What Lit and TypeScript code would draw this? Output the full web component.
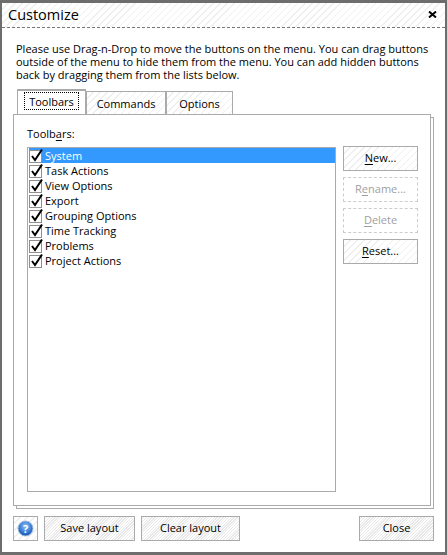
import { LitElement, css, html, svg } from "lit";
import { customElement } from "lit/decorators.js";

const toolbars = [
  "System",
  "Task Actions",
  "View Options",
  "Export",
  "Grouping Options",
  "Time Tracking",
  "Problems",
  "Project Actions",
];

const checkIcon = svg`<svg class="check" width="15" height="15" viewBox="0 0 15 15">
  <rect x="0.5" y="2.5" width="12" height="12" fill="#fff" stroke="#8e8e8e" />
  <path d="M3 8 L6 12 L13 1.5" fill="none" stroke="#000" stroke-width="2" />
</svg>`;

@customElement("app-root")
export class AppRoot extends LitElement {
  static get styles() {
    return css`
      :host {
        display: block;
        width: 447px;
        height: 555px;
        box-sizing: border-box;
        border: solid #6d6d6d;
        border-width: 3px 2px;
        background: #fff;
        font-family: "Open Sans", "Noto Sans", sans-serif;
        font-size: 11px;
        color: #000;
      }

      .hatch {
        background: repeating-linear-gradient(135deg, #fff 0 4px, #efefef 4px 5px);
      }

      .title {
        box-sizing: border-box;
        height: 25px;
        display: flex;
        align-items: center;
        justify-content: space-between;
        padding: 0 8px 2px 6px;
        border-bottom: 1px dashed #777;
        font-size: 14.5px;
      }

      .close {
        display: block;
      }

      .content {
        padding: 14px 11px 0;
      }

      .intro {
        margin: 0 0 8px 3px;
        line-height: 13px;
        white-space: nowrap;
      }

      .tabs {
        display: flex;
        align-items: flex-end;
        margin-left: 4px;
        margin-bottom: -1px;
        position: relative;
      }

      .tab {
        box-sizing: border-box;
        height: 24px;
        border: 1px solid #aaa;
        border-bottom: none;
        display: flex;
        align-items: center;
        justify-content: center;
      }

      .tab.active {
        height: 26px;
        background: #fff;
        border-width: 2px 1px 0;
        align-items: flex-start;
      }

      .tab.active span {
        border: 1px dotted #000;
        margin-top: 1px;
        padding: 1px 4px 0;
        line-height: 15px;
      }

      .panel-wrap {
        position: relative;
        width: 421px;
        height: 395px;
      }

      .panel-back {
        position: absolute;
        left: 3px;
        top: 3px;
        right: 0;
        bottom: 0;
        border: 1px solid #aaa;
      }

      .panel {
        position: absolute;
        left: 0;
        top: 0;
        right: 3px;
        bottom: 3px;
        box-sizing: border-box;
        border: 1px solid #aaa;
        background: #fff;
        padding: 11px 11px 13px 13px;
      }

      .label {
        height: 21px;
      }

      u {
        text-underline-offset: 2px;
      }

      .body {
        display: flex;
        gap: 7px;
        align-items: flex-start;
      }

      .list {
        box-sizing: border-box;
        width: 309px;
        height: 345px;
        border: 1px solid #aaa;
        padding: 0;
      }

      .row {
        height: 15px;
        display: flex;
        align-items: center;
        line-height: 15px;
        margin: 0 0 0 1px;
      }

      .row.selected {
        background: #3399ff;
        color: #fff;
      }

      .check {
        flex: none;
        margin-right: 1px;
      }

      .actions {
        display: flex;
        flex-direction: column;
        gap: 6px;
        margin-top: -1px;
      }

      .btn {
        box-sizing: border-box;
        width: 75px;
        height: 25px;
        border: 1px solid #aaa;
        display: flex;
        align-items: center;
        justify-content: center;
        font: inherit;
        padding: 0 0 2px;
        color: inherit;
      }

      .btn.disabled {
        border: 1px dashed #ccc;
        color: #a0a0a0;
        background: #fff;
      }

      .footer {
        display: flex;
        gap: 6px;
        margin-top: 7px;
      }

      .footer .btn.dense {
        background: repeating-linear-gradient(135deg, #fff 0 1px, #e8e8e8 1px 2px);
      }

      .help {
        width: 25px;
      }

      .footer .btn.help {
        padding: 0;
      }

      .save {
        width: 91px;
      }

      .clear {
        width: 99px;
      }

      .closebtn {
        margin-left: auto;
      }
    `;
  }

  render() {
    return html`
      <div class="title hatch">
        <span>Customize</span>
        <svg class="close" width="9" height="7" viewBox="0 0 9 7">
          <path d="M1 0.5 L8 6.5 M8 0.5 L1 6.5" stroke="#000" stroke-width="2" />
        </svg>
      </div>
      <div class="content">
        <p class="intro">
          Please use Drag-n-Drop to move the buttons on the menu. You can drag buttons<br />
          outside of the menu to hide them from the menu. You can add hidden buttons<br />
          back by dragging them from the lists below.
        </p>
        <div class="tabs">
          <div class="tab active" style="width:69px"><span>Toolbars</span></div>
          <div class="tab hatch" style="width:80px">Commands</div>
          <div class="tab hatch" style="width:67px">Options</div>
        </div>
        <div class="panel-wrap">
          <div class="panel-back"></div>
          <div class="panel">
            <div class="label">Toolb<u>a</u>rs:</div>
            <div class="body">
              <div class="list">
                ${toolbars.map(
                  (name, i) => html`<div class="row ${i === 0 ? "selected" : ""}">${checkIcon}<span>${name}</span></div>`
                )}
              </div>
              <div class="actions">
                <button class="btn hatch"><span><u>N</u>ew...</span></button>
                <button class="btn disabled"><span>R<u>e</u>name...</span></button>
                <button class="btn disabled"><span><u>D</u>elete</span></button>
                <button class="btn hatch"><span><u>R</u>eset...</span></button>
              </div>
            </div>
          </div>
        </div>
        <div class="footer">
          <button class="btn hatch help">
            <svg width="17" height="17" viewBox="0 0 17 17">
              <defs>
                <radialGradient id="helpfill" cx="50%" cy="35%" r="65%">
                  <stop offset="0" stop-color="#8fc0f5" />
                  <stop offset="0.7" stop-color="#2f74d0" />
                  <stop offset="1" stop-color="#1a4fa5" />
                </radialGradient>
              </defs>
              <circle cx="8.5" cy="8.5" r="7.5" fill="url(#helpfill)" stroke="#9fb9dc" />
              <text x="8.5" y="12.5" text-anchor="middle" font-size="11" font-weight="700" fill="#fff">?</text>
            </svg>
          </button>
          <button class="btn dense save">Save layout</button>
          <button class="btn dense clear">Clear layout</button>
          <button class="btn dense closebtn">Close</button>
        </div>
      </div>
    `;
  }
}
